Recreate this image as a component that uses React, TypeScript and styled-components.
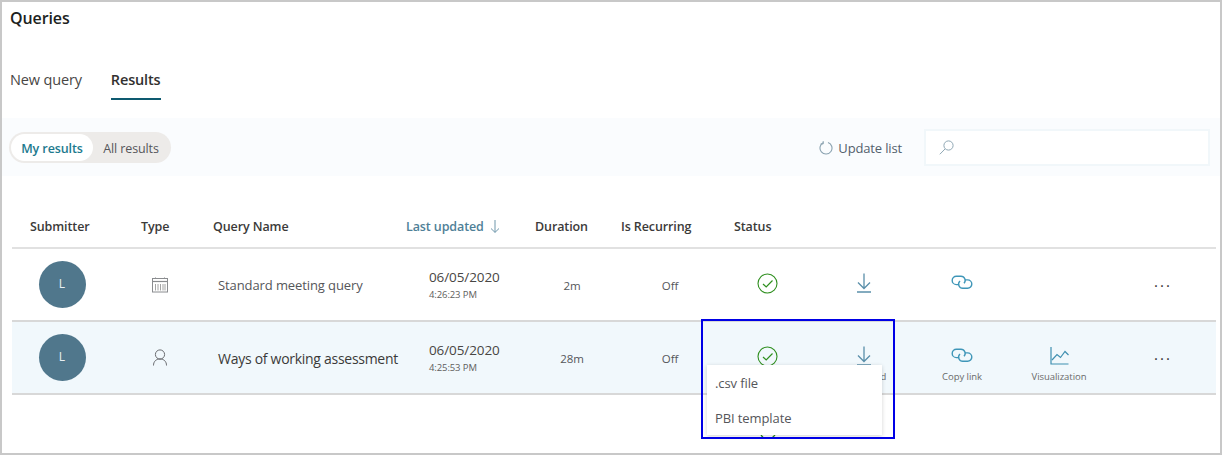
import React from "react";
import styled, { createGlobalStyle } from "styled-components";

const Global = createGlobalStyle`
  html, body { margin: 0; padding: 0; background: #fff; }
  body { font-family: "Open Sans", "Noto Sans", "Liberation Sans", sans-serif; color: #323130; }
  * { box-sizing: border-box; }
`;

const Page = styled.div`
  position: relative;
  width: 1222px;
  height: 455px;
  border: 2px solid #c8c8c8;
  overflow: hidden;
  background: #fff;
`;
const Title = styled.h1`
  margin: 0;
  padding: 6px 0 0 8px;
  height: 36px;
  font-size: 16px;
  line-height: 20px;
  font-weight: 600;
  letter-spacing: -0.1px;
  color: #201f1e;
`;
const Tabs = styled.div`
  display: flex;
  gap: 29px;
  padding: 30px 0 0 8px;
  height: 80px;
`;
const Tab = styled.div<{ $active?: boolean }>`
  height: 32px;
  font-size: 14.5px;
  line-height: 24px;
  letter-spacing: -0.15px;
  font-weight: ${(p) => (p.$active ? 600 : 400)};
  color: ${(p) => (p.$active ? "#323130" : "#484644")};
  border-bottom: ${(p) => (p.$active ? "2px solid #0e5a70" : "none")};
  ${(p) => (p.$active ? "width: 50px; white-space: nowrap;" : "")}
`;
const Toolbar = styled.div`
  display: flex;
  align-items: center;
  height: 58px;
  background: #fafcfe;
  padding: 0 10px 0 7px;
`;
const Toggle = styled.div`
  display: flex;
  align-items: center;
  width: 162px;
  height: 31px;
  padding: 2px;
  border-radius: 16px;
  background: #edebe9;
`;
const ToggleItem = styled.div<{ $active?: boolean }>`
  height: 27px;
  line-height: 29px;
  border-radius: 14px;
  font-size: 12.5px;
  letter-spacing: -0.1px;
  text-align: center;
  width: ${(p) => (p.$active ? "82px" : "76px")};
  background: ${(p) => (p.$active ? "#fff" : "transparent")};
  color: ${(p) => (p.$active ? "#1d7a8e" : "#55565a")};
  font-weight: ${(p) => (p.$active ? 600 : 400)};
`;
const Update = styled.div`
  margin-left: auto;
  display: flex;
  align-items: center;
  gap: 5px;
  padding-top: 1px;
  font-size: 13px;
  letter-spacing: -0.15px;
  color: #52606c;
`;
const Search = styled.div`
  display: flex;
  align-items: center;
  width: 286px;
  height: 37px;
  margin-left: 22px;
  padding-left: 13px;
  background: #fff;
  border: 2px solid #f1f7fa;
`;
const Table = styled.div`
  margin: 0 4px 0 10px;
`;
const HeaderRow = styled.div`
  display: grid;
  grid-template-columns: 111px 72px 193px 129px 86px 113px 100px;
  align-items: center;
  height: 73px;
  padding: 30px 0 0 18px;
  border-bottom: 2px solid #e1e1e1;
  font-size: 12.5px;
  font-weight: 600;
  letter-spacing: -0.1px;
  color: #3b3a39;
`;
const HeaderCell = styled.div<{ $sorted?: boolean }>`
  display: flex;
  align-items: center;
  gap: 6px;
  white-space: nowrap;
  color: ${(p) => (p.$sorted ? "#4f7f97" : "inherit")};
`;
const Row = styled.div<{ $highlight?: boolean }>`
  display: grid;
  grid-template-columns: 100px 96px 221px 100px 86px 110px 84px 110px 86px 108px 98px;
  align-items: center;
  height: 73px;
  border-bottom: 2px solid #d8d8d8;
  background: ${(p) => (p.$highlight ? "#f1f8fc" : "#fff")};
`;
const Center = styled.div`
  display: flex;
  justify-content: center;
  align-items: center;
`;
const Avatar = styled.div`
  width: 47px;
  height: 47px;
  border-radius: 50%;
  background: #50778c;
  color: #e8eff3;
  font-size: 12px;
  line-height: 46px;
  text-align: center;
`;
const Name = styled.div<{ $strong?: boolean }>`
  padding: ${(p) => (p.$strong ? "2px" : "0")} 0 0 10px;
  font-size: ${(p) => (p.$strong ? "14px" : "13px")};
  letter-spacing: ${(p) => (p.$strong ? "-0.28px" : "-0.1px")};
  color: ${(p) => (p.$strong ? "#3b3a39" : "#55565a")};
  white-space: nowrap;
`;
const DateCell = styled.div`
  color: #484644;
  white-space: nowrap;
`;
const DateMain = styled.div`
  font-size: 13.5px;
  line-height: 20px;
  letter-spacing: -0.1px;
`;
const DateTime = styled.div`
  font-size: 9.5px;
  line-height: 16px;
  letter-spacing: -0.1px;
  color: #605e5c;
`;
const Small = styled.div`
  padding-top: 2px;
  text-align: center;
  font-size: 11.5px;
  letter-spacing: -0.1px;
  color: #55565a;
`;
const Action = styled.div`
  display: flex;
  flex-direction: column;
  align-items: center;
  height: 44px;
  padding-top: 9px;
`;
const IconSlot = styled.div`
  display: flex;
  align-items: center;
  justify-content: center;
  height: 22px;
  flex: none;
`;
const ActionLabel = styled.div`
  margin-top: 4px;
  font-size: 9.5px;
  line-height: 12px;
  letter-spacing: -0.05px;
  color: #6a6a6a;
  white-space: nowrap;
`;
const StatusCell = styled.div`
  display: flex;
  justify-content: center;
  padding-bottom: 2px;
`;
const More = styled.div`
  text-align: center;
  font-size: 15px;
  line-height: 12px;
  letter-spacing: 2px;
  padding: 0 0 8px 2px;
  color: #323130;
`;
const Menu = styled.div`
  position: absolute;
  left: 705px;
  top: 363px;
  width: 175px;
  height: 70px;
  padding: 0 8px;
  background: #fff;
  box-shadow: 0 1px 4px rgba(0, 0, 0, 0.18);
  z-index: 2;
`;
const MenuItem = styled.div`
  height: 35px;
  line-height: 36px;
  font-size: 13px;
  letter-spacing: -0.1px;
  color: #55565a;
`;
const Highlight = styled.div`
  position: absolute;
  left: 699px;
  top: 317px;
  width: 194px;
  height: 120px;
  border: 2.5px solid #0000e6;
  z-index: 3;
`;
const Peek = styled.svg`
  position: absolute;
  left: 758px;
  top: 433px;
  z-index: 1;
`;

const Calendar = () => (
  <svg width="16" height="16" viewBox="0 0 16 16" fill="none" stroke="#8a8c8f" strokeWidth="1">
    <rect x="0.5" y="1.5" width="15" height="13.5" />
    <path d="M0.5 4.5H15.5" strokeWidth="1.2" />
    <path d="M3.5 0.5V2M12.5 0.5V2" />
    <path d="M3.5 7V13.5M6 7V13.5M8.5 7V13.5M11 7V13.5M13 7V13.5" stroke="#a4a4a4" strokeWidth="1" />
  </svg>
);
const Person = () => (
  <svg width="16" height="17" viewBox="0 0 16 17" fill="none" stroke="#6a6c70" strokeWidth="1">
    <circle cx="8" cy="5.5" r="4.6" />
    <path d="M1.5 16.5C1.5 12.5 4 10 8 10S14.5 12.5 14.5 16.5" />
  </svg>
);
const Check = () => (
  <svg width="21" height="21" viewBox="0 0 21 21" fill="none" stroke="#2f8f1f">
    <circle cx="10.5" cy="10.5" r="9.5" strokeWidth="1.1" />
    <path d="M6 11L9.2 14L15.5 7.5" strokeWidth="1.2" />
  </svg>
);
const Download = () => (
  <svg width="16" height="20" viewBox="0 0 16 20" fill="none" stroke="#5a8faa" strokeWidth="1.3">
    <path d="M8 0.5V15M2 9.5L8 15.5L14 9.5" />
    <path d="M1 19H15" strokeWidth="1.5" />
  </svg>
);
const LinkIcon = () => (
  <svg width="22" height="15" viewBox="0 0 22 15" fill="none" stroke="#3f96b8" strokeWidth="1.4">
    <path d="M8 9.6H5.4A4.2 4.2 0 0 1 5.4 1.2H10A4.2 4.2 0 0 1 13 8.3" />
    <path d="M14 4.9H16.6A4.2 4.2 0 0 1 16.6 13.3H12A4.2 4.2 0 0 1 9 6" />
  </svg>
);
const Chart = () => (
  <svg width="19" height="18" viewBox="0 0 19 18" fill="none" stroke="#3f8fb0" strokeWidth="1.2">
    <path d="M1 0V17H18.5" />
    <path d="M2 13L7 7.5L10.5 10.5L15 4.5L18.5 8" />
  </svg>
);
const Refresh = () => (
  <svg width="14" height="14" viewBox="0 0 14 14" fill="none" stroke="#8aa2b0" strokeWidth="1.1">
    <path d="M4.5 1.6A6 6 0 1 0 9 1.4" />
    <path d="M4.2 0V3H1.6" strokeWidth="0.9" />
  </svg>
);
const SearchIcon = () => (
  <svg width="15" height="15" viewBox="0 0 15 15" fill="none" stroke="#8fa7b4" strokeWidth="1">
    <circle cx="9.5" cy="5.5" r="4.6" />
    <path d="M6 9L0.8 14.3" />
  </svg>
);
const SortArrow = () => (
  <svg width="10" height="13" viewBox="0 0 10 13" fill="none" stroke="#6f97ab" strokeWidth="1">
    <path d="M5 0V12.3M1 8.5L5 12.4L9 8.5" />
  </svg>
);

export default function App() {
  return (
    <Page>
      <Global />
      <Title>Queries</Title>
      <Tabs>
        <Tab>New query</Tab>
        <Tab $active>Results</Tab>
      </Tabs>
      <Toolbar>
        <Toggle>
          <ToggleItem $active>My results</ToggleItem>
          <ToggleItem>All results</ToggleItem>
        </Toggle>
        <Update>
          <Refresh />
          Update list
        </Update>
        <Search>
          <SearchIcon />
        </Search>
      </Toolbar>
      <Table>
        <HeaderRow>
          <HeaderCell>Submitter</HeaderCell>
          <HeaderCell>Type</HeaderCell>
          <HeaderCell>Query Name</HeaderCell>
          <HeaderCell $sorted>
            Last updated <SortArrow />
          </HeaderCell>
          <HeaderCell>Duration</HeaderCell>
          <HeaderCell>Is Recurring</HeaderCell>
          <HeaderCell>Status</HeaderCell>
        </HeaderRow>
        <Row>
          <Center><Avatar>L</Avatar></Center>
          <Center><Calendar /></Center>
          <Name>Standard meeting query</Name>
          <DateCell>
            <DateMain>06/05/2020</DateMain>
            <DateTime>4:26:23 PM</DateTime>
          </DateCell>
          <Small>2m</Small>
          <Small>Off</Small>
          <StatusCell><Check /></StatusCell>
          <Action><IconSlot><Download /></IconSlot></Action>
          <Action><IconSlot><LinkIcon /></IconSlot></Action>
          <div />
          <More>...</More>
        </Row>
        <Row $highlight>
          <Center><Avatar>L</Avatar></Center>
          <Center><Person /></Center>
          <Name $strong>Ways of working assessment</Name>
          <DateCell>
            <DateMain>06/05/2020</DateMain>
            <DateTime>4:25:53 PM</DateTime>
          </DateCell>
          <Small>28m</Small>
          <Small>Off</Small>
          <StatusCell><Check /></StatusCell>
          <Action>
            <IconSlot><Download /></IconSlot>
            <ActionLabel>Download</ActionLabel>
          </Action>
          <Action>
            <IconSlot><LinkIcon /></IconSlot>
            <ActionLabel>Copy link</ActionLabel>
          </Action>
          <Action>
            <IconSlot><Chart /></IconSlot>
            <ActionLabel>Visualization</ActionLabel>
          </Action>
          <More>...</More>
        </Row>
      </Table>
      <Peek width="18" height="4" viewBox="0 0 18 4" fill="none" stroke="#2f8f1f" strokeWidth="1.3">
        <path d="M1 0L3.5 3M12 3L15 0" />
      </Peek>
      <Menu>
        <MenuItem>.csv file</MenuItem>
        <MenuItem>PBI template</MenuItem>
      </Menu>
      <Highlight />
    </Page>
  );
}
